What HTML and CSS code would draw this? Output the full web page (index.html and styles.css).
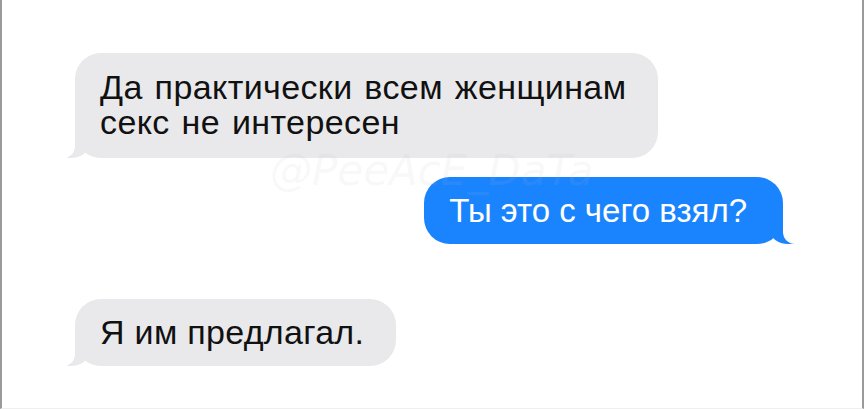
FILE: index.html
```html
<!DOCTYPE html>
<html lang="ru">
<head>
  <meta charset="UTF-8" />
  <meta name="viewport" content="width=device-width, initial-scale=1.0"/>
  <title>Чат</title>
  <link rel="stylesheet" href="styles.css">
</head>
<body>
  <div class="chat">
    <div class="row row-in first">
      <div class="bubble bubble-in">Да практически всем женщинам<br>секс не интересен</div>
    </div>
    <div class="row row-out">
      <div class="bubble bubble-out">Ты это с чего взял?</div>
    </div>
    <div class="row row-in last">
      <div class="bubble bubble-in">Я им предлагал.</div>
    </div>

    <div class="watermark">@PeeAcE_DaTa</div>
  </div>
</body>
</html>
```

FILE: styles.css
```css
* {
  box-sizing: border-box;
}

body {
  margin: 0;
  background: #fff;
  font-family: 'Liberation Sans', Arial, sans-serif;
}

.chat {
  position: relative;
  width: 864px;
  height: 409px;
  padding: 53px 0 0;
  border-left: 2px solid #9a9a9a;
  border-right: 2px solid #9a9a9a;
  border-bottom: 1px solid #efefef;
  overflow: hidden;
}

.row {
  display: flex;
}

.row-in {
  padding-left: 73px;
}

.row-out {
  justify-content: flex-end;
  padding-right: 79px;
  margin-top: 19px;
}

.row.last {
  margin-top: 55px;
}

.bubble {
  position: relative;
  font-size: 34px;
  line-height: 35px;
  padding: 16px 32px 16px 25px;
  border-radius: 26px;
}

.bubble-in {
  background: #e9e9eb;
  color: #111;
  letter-spacing: 0.3px;
}

.first .bubble-in {
  padding-top: 17px;
  padding-bottom: 18px;
  letter-spacing: 0.4px;
  word-spacing: 2px;
}

.bubble-out {
  background: #1a84ff;
  color: #fff;
  font-size: 33px;
  padding-right: 36px;
}

/* хвостики пузырей */
.bubble::before,
.bubble::after {
  content: "";
  position: absolute;
  bottom: 0;
  height: 26px;
}

.bubble-in::before {
  left: -8px;
  width: 22px;
  background: #e9e9eb;
  border-bottom-right-radius: 18px 14px;
}

.bubble-in::after {
  left: -28px;
  width: 28px;
  background: #fff;
  border-bottom-right-radius: 12px;
}

.bubble-out::before {
  right: -11px;
  width: 24px;
  background: #1a84ff;
  border-bottom-left-radius: 18px 14px;
}

.bubble-out::after {
  right: -30px;
  width: 30px;
  background: #fff;
  border-bottom-left-radius: 12px;
}

.watermark {
  position: absolute;
  left: 268px;
  top: 146px;
  font-size: 42px;
  font-style: italic;
  font-family: 'DejaVu Sans', sans-serif;
  font-weight: 200;
  color: rgba(190, 190, 190, 0.1);
  pointer-events: none;
}
```
